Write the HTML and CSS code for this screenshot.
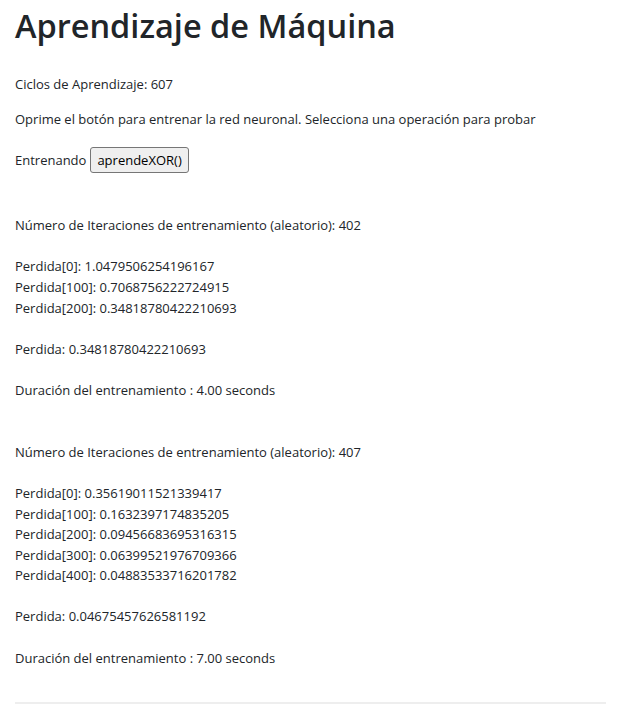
FILE: index.html
```html
<!DOCTYPE html>
<html lang="es">
<head>
<meta charset="utf-8">
<title>Aprendizaje de Máquina</title>
<link rel="stylesheet" href="styles.css">
</head>
<body>
<div class="container">
  <h1 class="title">Aprendizaje de Máquina</h1>
  <p class="line">Ciclos de Aprendizaje: 607</p>
  <p class="line">Oprime el botón para entrenar la red neuronal. Selecciona una operación para probar</p>
  <p class="line train"><span>Entrenando</span><button class="btn">aprendeXOR()</button></p>
  <div class="output">
    Número de Iteraciones de entrenamiento (aleatorio): 402<br><br>
    Perdida[0]: 1.0479506254196167<br>
    Perdida[100]: 0.7068756222724915<br>
    Perdida[200]: 0.34818780422210693<br><br>
    Perdida: 0.34818780422210693<br><br>
    Duración del entrenamiento : 4.00 seconds<br><br><br>
    Número de Iteraciones de entrenamiento (aleatorio): 407<br><br>
    Perdida[0]: 0.35619011521339417<br>
    Perdida[100]: 0.1632397174835205<br>
    Perdida[200]: 0.09456683695316315<br>
    Perdida[300]: 0.06399521976709366<br>
    Perdida[400]: 0.04883533716201782<br><br>
    Perdida: 0.04675457626581192<br><br>
    Duración del entrenamiento : 7.00 seconds
  </div>
  <hr class="rule">
</div>
</body>
</html>
```
FILE: styles.css
```css
html, body {
  margin: 0;
  padding: 0;
  background: #fff;
}
body {
  font-family: "Open Sans", "Noto Sans", sans-serif;
  font-size: 13px;
  color: #212529;
}
.container {
  padding: 2px 22px 0 15px;
}
.title {
  font-family: "Open Sans", "Noto Sans", sans-serif;
  font-size: 32.5px;
  font-weight: 600;
  line-height: 48px;
  margin: 0 0 24px;
}
.line {
  margin: 0 0 14px;
  line-height: 20.6px;
}
.train {
  display: flex;
  align-items: center;
  gap: 4px;
  height: 34px;
  margin-top: 1px;
}
.btn {
  font-family: inherit;
  font-size: 13px;
  color: #000;
  background: #efefef;
  border: 1px solid #767676;
  border-radius: 3px;
  padding: 2px 6px;
  height: 26px;
}
.output {
  margin-top: 38px;
  line-height: 20.6px;
}
.rule {
  border: 0;
  border-top: 2px solid #eee;
  margin: 34px 0 0;
}
```
